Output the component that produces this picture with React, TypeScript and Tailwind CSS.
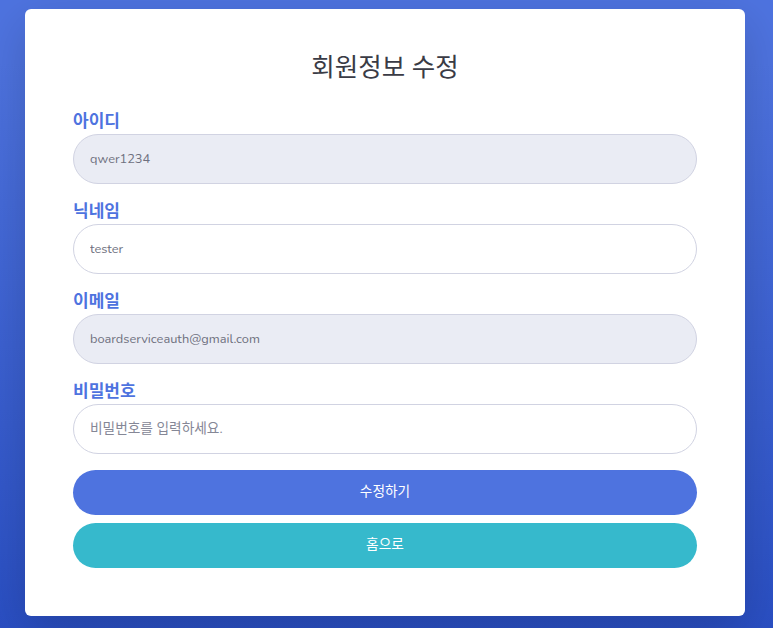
import React from "react";

const font = { fontFamily: "Nunito, Lato, 'Noto Sans CJK KR', sans-serif" };

function Field({ label, value, placeholder, disabled }: { label: string; value?: string; placeholder?: string; disabled?: boolean }) {
  return (
    <div className="flex flex-col">
      <label className="text-[17px] leading-[24px] font-semibold text-[#4e73df] pt-px">{label}</label>
      <input
        readOnly
        defaultValue={value}
        placeholder={placeholder}
        className={`h-[50px] w-full rounded-full border border-[#d1d3e2] px-4 text-[12.8px] text-[#6e707e] placeholder:text-[13.7px] placeholder:text-[#858796] outline-none ${disabled ? "bg-[#eaecf4]" : "bg-white"}`}
        style={font}
      />
    </div>
  );
}

export default function App() {
  return (
    <div
      className="min-h-screen w-full bg-[linear-gradient(180deg,#4e73df_10%,#2a4fc3_100%)] pl-[25px] pt-[9px] pb-[12px]"
      style={font}
    >
      <div className="w-[720px] rounded-[6px] bg-white px-12 pt-[43px] pb-12 shadow-[0_1rem_3rem_rgba(0,0,0,0.175)]">
        <h1 className="text-center text-[25.5px] leading-[32px] font-normal text-[#3a3b45] mb-[25px]">회원정보 수정</h1>
        <div className="flex flex-col gap-[15px]">
          <Field label="아이디" value="qwer1234" disabled />
          <Field label="닉네임" value="tester" />
          <Field label="이메일" value="boardserviceauth@gmail.com" disabled />
          <Field label="비밀번호" placeholder="비밀번호를 입력하세요." />
        </div>
        <div className="mt-4 flex flex-col gap-2">
          <button className="h-[45px] w-full rounded-full bg-[#4e73df] text-[13.7px] text-white">수정하기</button>
          <button className="h-[45px] w-full rounded-full bg-[#36b9cc] text-[13.7px] text-white">홈으로</button>
        </div>
      </div>
    </div>
  );
}
